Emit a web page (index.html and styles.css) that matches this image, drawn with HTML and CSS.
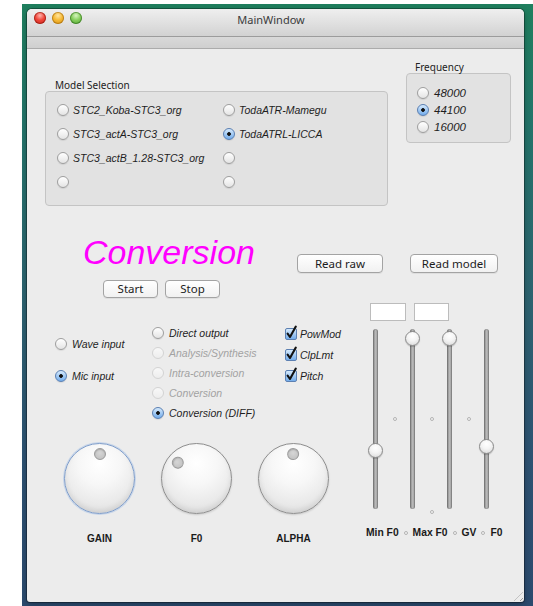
FILE: index.html
```html
<!DOCTYPE html>
<html lang="en">
<head>
<meta charset="utf-8">
<title>MainWindow</title>
<link rel="stylesheet" href="styles.css">
</head>
<body>
<div class="desktop">
  <div class="window">
    <div class="titlebar">
      <div class="lights">
        <span class="light red"></span>
        <span class="light yellow"></span>
        <span class="light green"></span>
      </div>
      <div class="title">MainWindow</div>
    </div>
    <div class="toolbar"></div>

    <div class="content">
      <section class="top">
        <div class="group model-group">
          <div class="group-label">Model Selection</div>
          <div class="group-box model-box">
            <label class="opt"><span class="radio"></span><span>STC2_Koba-STC3_org</span></label>
            <label class="opt"><span class="radio"></span><span>STC3_actA-STC3_org</span></label>
            <label class="opt"><span class="radio"></span><span>STC3_actB_1.28-STC3_org</span></label>
            <label class="opt"><span class="radio"></span></label>
            <label class="opt"><span class="radio"></span><span>TodaATR-Mamegu</span></label>
            <label class="opt"><span class="radio on"></span><span>TodaATRL-LICCA</span></label>
            <label class="opt"><span class="radio"></span></label>
            <label class="opt"><span class="radio"></span></label>
          </div>
        </div>
        <div class="group freq-group">
          <div class="group-label">Frequency</div>
          <div class="group-box freq-box">
            <label class="opt freq"><span class="radio"></span><span>48000</span></label>
            <label class="opt freq"><span class="radio on"></span><span>44100</span></label>
            <label class="opt freq"><span class="radio"></span><span>16000</span></label>
          </div>
        </div>
      </section>

      <section class="conv-row">
        <div class="conv-left">
          <div class="conv-title">Conversion</div>
          <div class="btn-row">
            <button class="btn btn-small">Start</button>
            <button class="btn btn-small">Stop</button>
          </div>
        </div>
        <div class="read-row">
          <button class="btn btn-raw">Read raw</button>
          <button class="btn btn-model">Read model</button>
        </div>
      </section>

      <section class="lower">
        <div class="left-area">
          <div class="controls">
            <div class="col input-col">
              <label class="opt"><span class="radio"></span><span>Wave input</span></label>
              <label class="opt"><span class="radio on"></span><span>Mic input</span></label>
            </div>
            <div class="col mode-col">
              <label class="opt"><span class="radio"></span><span>Direct output</span></label>
              <label class="opt disabled"><span class="radio off"></span><span>Analysis/Synthesis</span></label>
              <label class="opt disabled"><span class="radio off"></span><span>Intra-conversion</span></label>
              <label class="opt disabled"><span class="radio off"></span><span>Conversion</span></label>
              <label class="opt"><span class="radio on"></span><span>Conversion (DIFF)</span></label>
            </div>
            <div class="col check-col">
              <label class="opt check"><span class="checkbox"><svg viewBox="0 0 12 12" width="12" height="12"><path d="M2.6 5.6 L5 9 L10.8 -1.4" /></svg></span><span>PowMod</span></label>
              <label class="opt check"><span class="checkbox"><svg viewBox="0 0 12 12" width="12" height="12"><path d="M2.6 5.6 L5 9 L10.8 -1.4" /></svg></span><span>ClpLmt</span></label>
              <label class="opt check"><span class="checkbox"><svg viewBox="0 0 12 12" width="12" height="12"><path d="M2.6 5.6 L5 9 L10.8 -1.4" /></svg></span><span>Pitch</span></label>
            </div>
          </div>

          <div class="knobs">
            <div class="knob-col">
              <div class="knob focus"><span class="pointer" style="transform: rotate(0deg)"><span class="pip"></span></span></div>
              <div class="knob-label">GAIN</div>
            </div>
            <div class="knob-col">
              <div class="knob"><span class="pointer" style="transform: rotate(-51deg)"><span class="pip"></span></span></div>
              <div class="knob-label">F0</div>
            </div>
            <div class="knob-col">
              <div class="knob"><span class="pointer" style="transform: rotate(-2deg)"><span class="pip"></span></span></div>
              <div class="knob-label">ALPHA</div>
            </div>
          </div>
        </div>

        <div class="slider-panel">
          <div class="fields">
            <span class="field field-a"></span>
            <span class="field field-b"></span>
          </div>
          <div class="sliders">
            <div class="slider"><span class="track"></span><span class="handle" style="top: 114px"></span><span class="tick"></span></div>
            <div class="slider"><span class="track"></span><span class="handle" style="top: 1.5px"></span><span class="tick"></span><span class="tick tick-low"></span></div>
            <div class="slider"><span class="track"></span><span class="handle" style="top: 1.5px"></span><span class="tick"></span></div>
            <div class="slider"><span class="track"></span><span class="handle" style="top: 109.5px"></span></div>
          </div>
          <div class="slider-labels">
            <span>Min F0</span><span class="dot"></span>
            <span>Max F0</span><span class="dot"></span>
            <span>GV</span><span class="dot"></span>
            <span>F0</span>
          </div>
        </div>
      </section>

      <span class="grip"></span>
    </div>
  </div>
</div>
</body>
</html>
```

FILE: styles.css
```css
* { box-sizing: border-box; }

html, body { margin: 0; }

body {
  width: 533px;
  height: 606px;
  overflow: hidden;
  background: #fff;
  padding: 4px 0 0 22px;
  font-family: "Liberation Sans", Arial, sans-serif;
  color: #1d1d1d;
}

/* desktop wallpaper behind the window */
.desktop {
  width: 511px;
  height: 602px;
  padding: 5px 9px 0 5px;
  background: linear-gradient(180deg, #1f7f5e 0%, #23746a 20%, #2d6270 50%, #2d5272 75%, #2b4a6e 100%);
}

.window {
  width: 497px;
  height: 593px;
  background: #ececec;
  border-radius: 5px 5px 3px 3px;
  box-shadow: 0 0 0 1px rgba(0, 0, 0, .3), 0 2px 6px rgba(0, 0, 0, .3);
  display: flex;
  flex-direction: column;
  overflow: hidden;
}

/* title bar */
.titlebar {
  height: 28px;
  flex: none;
  display: grid;
  grid-template-columns: 1fr auto 1fr;
  background: linear-gradient(#efefef, #d2d2d2);
  border-bottom: 1px solid #9c9c9c;
}

.lights {
  display: flex;
  gap: 6px;
  padding: 3px 0 0 7px;
}

.light {
  width: 12px;
  height: 12px;
  border-radius: 50%;
}

.red {
  background: radial-gradient(circle at 50% 30%, #ffb3ab 0, #f0463b 45%, #c72219 100%);
  box-shadow: inset 0 0 0 1px rgba(130, 20, 10, .55);
}

.yellow {
  background: radial-gradient(circle at 50% 30%, #ffe6a1 0, #f6b935 45%, #d48e14 100%);
  box-shadow: inset 0 0 0 1px rgba(150, 95, 10, .55);
}

.green {
  background: radial-gradient(circle at 50% 30%, #d6f5bf 0, #86cf5c 45%, #4b9d31 100%);
  box-shadow: inset 0 0 0 1px rgba(40, 100, 20, .55);
}

.title {
  font: 11px/14px "Noto Sans", "DejaVu Sans", sans-serif;
  color: #3b3b3b;
  padding: 4px 9px 0 0;
}

.toolbar {
  height: 12px;
  flex: none;
  background: linear-gradient(#d9d9d9, #cfcfcf);
  border-bottom: 1px solid #ababab;
}

.content {
  flex: 1;
  position: relative;
}

/* group boxes */
.top {
  display: flex;
  align-items: flex-start;
  gap: 18px;
  padding: 12px 0 0 18px;
}

.model-group { margin-top: 18px; }

.group-label {
  font: 10px/12px "Noto Sans", "DejaVu Sans", sans-serif;
  color: #222;
  padding-left: 10px;
}

.freq-group .group-label { padding-left: 9px; }

.group-box {
  background: #e2e2e2;
  border: 1px solid #c4c4c4;
  border-radius: 4px;
}

.model-box {
  width: 343px;
  height: 115px;
  padding: 6px 0 0 11px;
  display: grid;
  grid-template-columns: 166px 166px;
  grid-template-rows: repeat(4, 24px);
  grid-auto-flow: column;
}

.freq-box {
  width: 105px;
  height: 70px;
  padding: 10px 0 0 10px;
  display: grid;
  grid-template-rows: repeat(3, 17px);
}

/* radio / check options */
.opt {
  display: flex;
  align-items: center;
  gap: 4px;
  font-style: italic;
  font-size: 10.5px;
  color: #1e1e1e;
  white-space: nowrap;
}

.opt.freq { gap: 5px; font-size: 11.5px; }

.opt.disabled { color: #a2a2a2; }

.radio {
  width: 12px;
  height: 12px;
  flex: none;
  border-radius: 50%;
  border: 1px solid #9e9e9e;
  background: linear-gradient(#ffffff, #e4e4e4);
  box-shadow: 0 1px 1px rgba(0, 0, 0, .08);
}

.radio.on {
  border-color: #5a7fb2;
  background:
    radial-gradient(circle, #111 0 1.5px, transparent 2.2px),
    linear-gradient(#d6eafc, #73aceb);
}

.radio.off {
  border-color: #d3d3d3;
  background: linear-gradient(#f8f8f8, #ededed);
  box-shadow: none;
}

.checkbox {
  width: 12px;
  height: 12px;
  flex: none;
  border: 1px solid #5c80b2;
  border-radius: 2px;
  background: linear-gradient(#d6eafc, #73aceb);
  display: flex;
  align-items: center;
  justify-content: center;
}

.checkbox svg {
  overflow: visible;
  margin: -1px;
}

.checkbox path {
  fill: none;
  stroke: #111;
  stroke-width: 2.1;
  stroke-linecap: round;
  stroke-linejoin: round;
}

.opt.check { gap: 3px; }

/* conversion row */
.conv-row {
  display: flex;
  align-items: flex-start;
  margin-top: 25.5px;
}

.conv-left {
  width: 215px;
  margin-left: 55px;
}

.conv-title {
  font: italic 34px/40px "Liberation Sans", Arial, sans-serif;
  color: #ff00ff;
  padding-left: 1px;
}

.btn-row {
  display: flex;
  gap: 7px;
  margin-top: 8.5px;
  padding-left: 21px;
}

.btn {
  height: 19px;
  padding: 0;
  border: 1px solid #a3a3a3;
  border-radius: 4px;
  background: linear-gradient(#ffffff, #f1f1f1);
  box-shadow: 0 1px 0 rgba(0, 0, 0, .06);
  font: 11.5px/17px "Noto Sans", "DejaVu Sans", sans-serif;
  color: #1c1c1c;
}

.btn-small { width: 55px; height: 18px; line-height: 16px; }
.btn-raw { width: 86px; }
.btn-model { width: 88px; }

.read-row {
  display: flex;
  gap: 27px;
  margin-top: 22.5px;
}

/* lower area */
.lower {
  display: flex;
  align-items: flex-start;
}

.left-area { width: 337px; }

.controls {
  display: flex;
  align-items: flex-start;
  padding-left: 28px;
}

.col { display: grid; }

.input-col {
  width: 97px;
  margin-top: 36px;
  grid-auto-rows: 20px;
  row-gap: 12px;
}

.input-col .opt,
.mode-col .opt { gap: 5px; }

.mode-col {
  width: 133px;
  margin-top: 25px;
  grid-auto-rows: 20px;
}

.check-col {
  margin-top: 25px;
  grid-auto-rows: 21px;
}

/* knobs */
.knobs {
  display: flex;
  gap: 26px;
  margin-top: 20px;
  padding-left: 37px;
}

.knob-col {
  width: 71px;
  display: flex;
  flex-direction: column;
  align-items: center;
}

.knob {
  width: 71px;
  height: 71px;
  border-radius: 50%;
  border: 1px solid #8e8e8e;
  background: radial-gradient(circle at 50% 28%, #ffffff 0, #f7f7f7 35%, #e6e6e6 75%, #d4d4d4 100%);
  box-shadow: inset 0 -3px 5px rgba(0, 0, 0, .08), 0 1px 2px rgba(0, 0, 0, .15);
  position: relative;
}

.knob.focus {
  border-color: #7e9dcb;
  box-shadow: inset 0 -3px 5px rgba(0, 0, 0, .08), 0 0 0 1px rgba(150, 185, 230, .45);
}

.pointer {
  position: absolute;
  inset: 0;
}

.pip {
  position: absolute;
  left: 28.5px;
  top: 3.5px;
  width: 12px;
  height: 12px;
  border-radius: 50%;
  border: 1px solid #9a9a9a;
  background: radial-gradient(circle at 50% 40%, #d6d6d6, #bdbdbd);
  box-shadow: inset 0 1px 1px rgba(0, 0, 0, .15);
}

.knob-label {
  margin-top: 19px;
  font: bold 10px/12px "Liberation Sans", Arial, sans-serif;
  color: #1a1a1a;
}

/* sliders */
.slider-panel {
  display: flex;
  flex-direction: column;
}

.fields {
  display: flex;
  gap: 8px;
  margin: 5px 0 0 6px;
}

.field {
  height: 18px;
  background: #fff;
  border: 1px solid #bcbcbc;
}

.field-a { width: 36px; }
.field-b { width: 35px; }

.sliders {
  display: flex;
  gap: 15px;
  margin-top: 8px;
}

.slider {
  width: 22px;
  height: 180px;
  position: relative;
  display: flex;
  justify-content: center;
}

.track {
  width: 5px;
  height: 100%;
  border-radius: 3px;
  background: linear-gradient(90deg, #7f7f7f, #bdbdbd 55%, #8c8c8c);
  box-shadow: inset 0 0 0 1px rgba(0, 0, 0, .12);
}

.handle {
  position: absolute;
  left: 3.5px;
  width: 15px;
  height: 15px;
  border-radius: 50%;
  border: 1px solid #8a8a8a;
  background: radial-gradient(circle at 50% 30%, #ffffff 0, #f4f4f4 45%, #d6d6d6 100%);
  box-shadow: 0 1px 1px rgba(0, 0, 0, .2);
}

.tick {
  position: absolute;
  left: 29px;
  top: 88px;
  width: 4px;
  height: 4px;
  border-radius: 50%;
  border: 1px solid #b3b3b3;
  background: #f4f4f4;
}

.tick-low { top: 181px; }

.slider-labels {
  display: flex;
  align-items: center;
  gap: 5px;
  margin-top: 18px;
  padding-left: 2px;
  font: bold 10.3px/12px "Liberation Sans", Arial, sans-serif;
  color: #1a1a1a;
}

.slider-labels .dot {
  width: 4px;
  height: 4px;
  border-radius: 50%;
  border: 1px solid #b3b3b3;
  background: #f4f4f4;
}

/* size grip in the window corner */
.grip {
  position: absolute;
  right: 1px;
  bottom: 1px;
  width: 9px;
  height: 9px;
  background: repeating-linear-gradient(135deg, transparent 0 2px, #9a9a9a 2px 3px, transparent 3px 4px);
  clip-path: polygon(100% 0, 100% 100%, 0 100%);
}
```
